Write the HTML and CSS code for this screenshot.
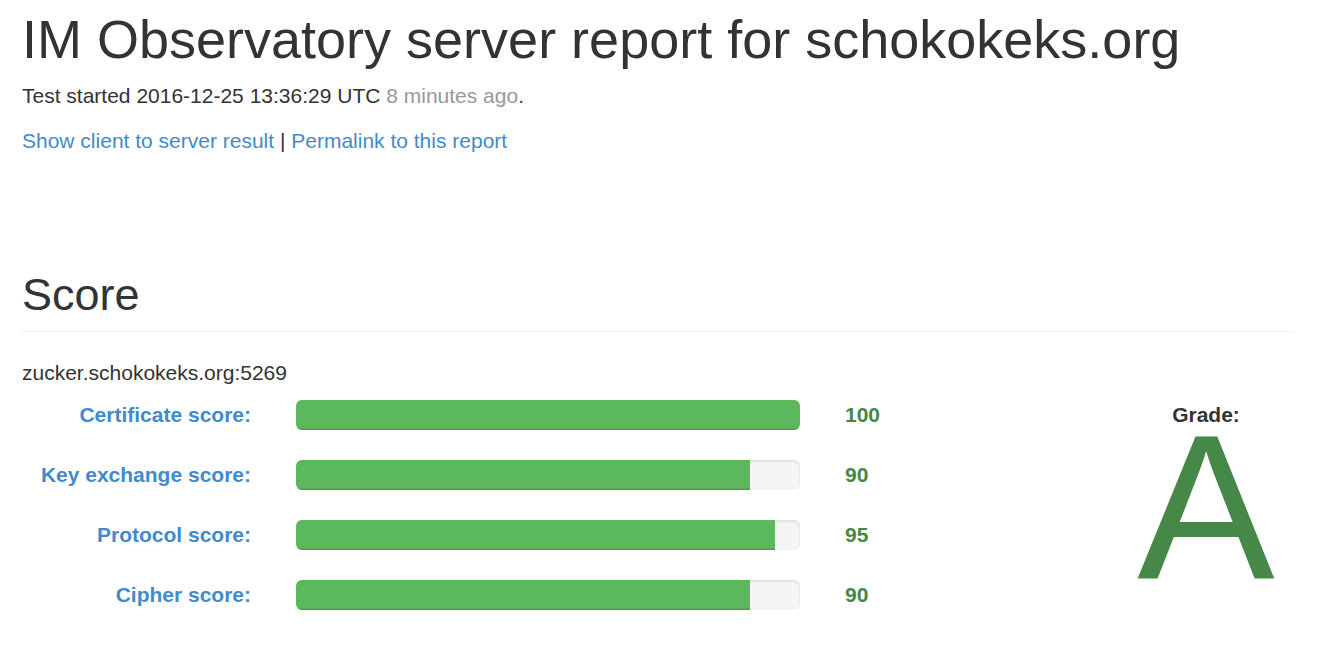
FILE: index.html
```html
<!DOCTYPE html>
<html lang="en">
<head>
<meta charset="utf-8">
<title>IM Observatory server report for schokokeks.org</title>
<link rel="stylesheet" href="styles.css">
</head>
<body>
<div class="container">
  <h1 class="title">IM Observatory server report for schokokeks.org</h1>
  <p class="started">Test started 2016-12-25 13:36:29 UTC <span class="muted">8 minutes ago</span>.</p>
  <p class="links"><a href="#">Show client to server result</a> | <a href="#">Permalink to this report</a></p>

  <h2 class="section-title">Score</h2>
  <hr class="rule">

  <p class="host">zucker.schokokeks.org:5269</p>

  <div class="score-block">
    <div class="rows">
      <div class="row">
        <div class="label">Certificate score:</div>
        <div class="progress"><div class="bar" style="width:100%"></div></div>
        <div class="value">100</div>
      </div>
      <div class="row">
        <div class="label">Key exchange score:</div>
        <div class="progress"><div class="bar" style="width:90%"></div></div>
        <div class="value">90</div>
      </div>
      <div class="row">
        <div class="label">Protocol score:</div>
        <div class="progress"><div class="bar" style="width:95%"></div></div>
        <div class="value">95</div>
      </div>
      <div class="row">
        <div class="label">Cipher score:</div>
        <div class="progress"><div class="bar" style="width:90%"></div></div>
        <div class="value">90</div>
      </div>
    </div>
    <div class="grade">
      <div class="grade-label">Grade:</div>
      <div class="grade-letter">A</div>
    </div>
  </div>
</div>
</body>
</html>
```

FILE: styles.css
```css
html, body {
  margin: 0;
  padding: 0;
  background: #fff;
}

body {
  font-family: "Liberation Sans", Arial, Helvetica, sans-serif;
  font-size: 21px;
  line-height: 30px;
  color: #333;
}

.container {
  width: 1271px;
  margin-left: 22px;
}

.title {
  font-size: 54px;
  font-weight: normal;
  line-height: 1.1;
  margin: 10px 0 12px;
}

.started,
.links {
  margin: 0 0 15px;
}

.muted {
  color: #999;
}

a {
  color: #428bca;
  text-decoration: none;
}

.section-title {
  font-size: 45px;
  font-weight: normal;
  line-height: 1.1;
  margin: 114px 0 0;
}

.rule {
  border: 0;
  border-top: 1px solid #eee;
  margin: 11px 0 0;
  height: 0;
}

.host {
  margin: 26px 0 12px;
}

.score-block {
  display: flex;
  align-items: flex-start;
}

.rows {
  flex: 1;
  display: flex;
  flex-direction: column;
  gap: 30px;
}

.row {
  display: flex;
  align-items: center;
  height: 30px;
}

.label {
  width: 229px;
  text-align: right;
  font-weight: bold;
  color: #428bca;
}

.progress {
  width: 504px;
  height: 30px;
  margin-left: 45px;
  background: #f5f5f5;
  border-radius: 6px;
  overflow: hidden;
  box-shadow: inset 0 1.5px 3px rgba(0, 0, 0, 0.1);
}

.bar {
  height: 100%;
  background: #5cb85c;
  box-shadow: inset 0 -1.5px 0 rgba(0, 0, 0, 0.15);
}

.value {
  margin-left: 45px;
  font-weight: bold;
  color: #468847;
}

.grade {
  width: 170px;
  margin-right: 2px;
  display: flex;
  flex-direction: column;
  align-items: center;
}

.grade-label {
  font-weight: bold;
  color: #333;
}

.grade-letter {
  font-size: 206px;
  line-height: 150px;
  margin-top: 3px;
  color: #468847;
}
```
